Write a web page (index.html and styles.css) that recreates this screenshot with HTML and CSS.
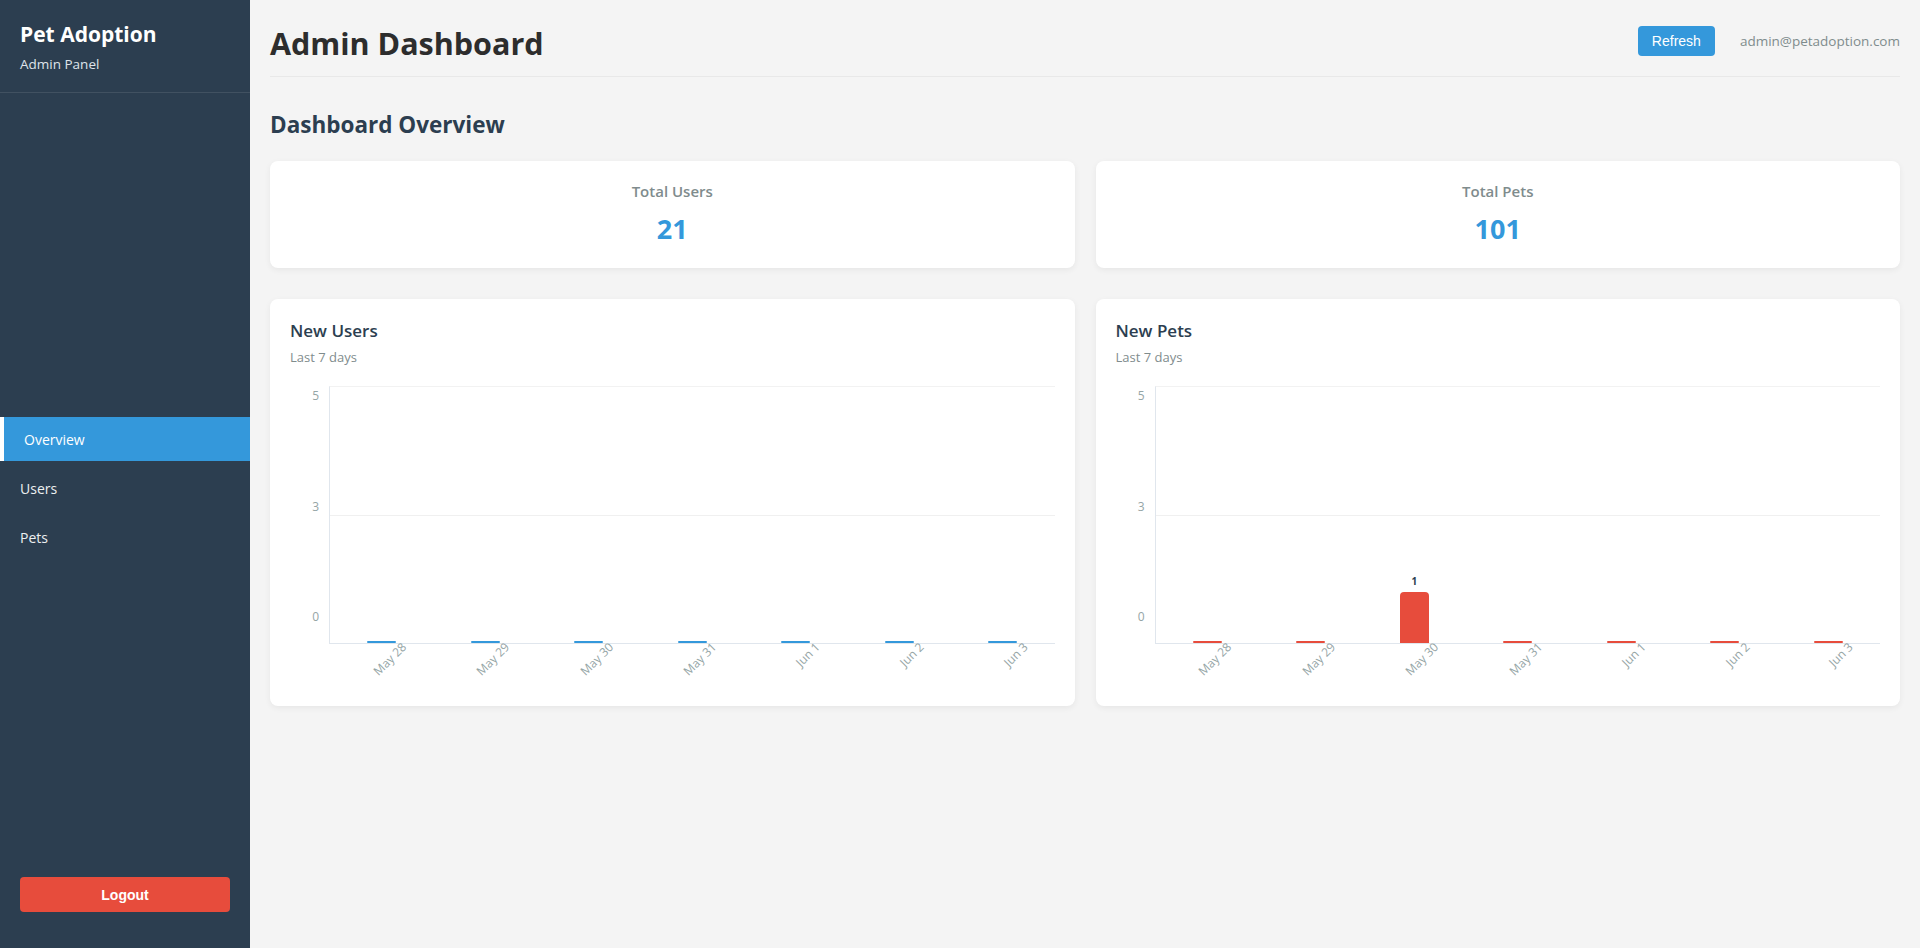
FILE: index.html
```html
<!DOCTYPE html>
<html lang="en">
<head>
<meta charset="utf-8">
<title>Admin Dashboard</title>
<link rel="stylesheet" href="styles.css">
</head>
<body>
<div class="layout">
  <aside class="sidebar">
    <div class="sidebar-header">
      <h1 class="brand">Pet Adoption</h1>
      <p class="brand-sub">Admin Panel</p>
    </div>
    <nav class="nav">
      <ul class="nav-list">
        <li class="nav-item active">Overview</li>
        <li class="nav-item">Users</li>
        <li class="nav-item">Pets</li>
      </ul>
    </nav>
    <div class="sidebar-footer">
      <button class="logout-btn">Logout</button>
    </div>
  </aside>

  <main class="main">
    <header class="topbar">
      <h1 class="page-title">Admin Dashboard</h1>
      <div class="topbar-right">
        <button class="refresh-btn">Refresh</button>
        <span class="user-email">admin@petadoption.com</span>
      </div>
    </header>

    <h2 class="section-title">Dashboard Overview</h2>

    <div class="stats">
      <div class="stat-card">
        <div class="stat-label">Total Users</div>
        <div class="stat-value">21</div>
      </div>
      <div class="stat-card">
        <div class="stat-label">Total Pets</div>
        <div class="stat-value">101</div>
      </div>
    </div>

    <div class="charts">
      <div class="chart-card">
        <div class="chart-title">New Users</div>
        <div class="chart-sub">Last 7 days</div>
        <div class="chart">
          <div class="y-axis"><span>5</span><span>3</span><span>0</span></div>
          <div class="chart-body">
            <div class="plot">
              <div class="grid-mid"></div>
              <div class="slot"><div class="bar blue zero"></div></div>
              <div class="slot"><div class="bar blue zero"></div></div>
              <div class="slot"><div class="bar blue zero"></div></div>
              <div class="slot"><div class="bar blue zero"></div></div>
              <div class="slot"><div class="bar blue zero"></div></div>
              <div class="slot"><div class="bar blue zero"></div></div>
              <div class="slot"><div class="bar blue zero"></div></div>
            </div>
            <div class="x-axis">
              <div class="x-slot"><div class="x-anchor"><span class="x-label">May 28</span></div></div>
              <div class="x-slot"><div class="x-anchor"><span class="x-label">May 29</span></div></div>
              <div class="x-slot"><div class="x-anchor"><span class="x-label">May 30</span></div></div>
              <div class="x-slot"><div class="x-anchor"><span class="x-label">May 31</span></div></div>
              <div class="x-slot"><div class="x-anchor"><span class="x-label">Jun 1</span></div></div>
              <div class="x-slot"><div class="x-anchor"><span class="x-label">Jun 2</span></div></div>
              <div class="x-slot"><div class="x-anchor"><span class="x-label">Jun 3</span></div></div>
            </div>
          </div>
        </div>
      </div>

      <div class="chart-card">
        <div class="chart-title">New Pets</div>
        <div class="chart-sub">Last 7 days</div>
        <div class="chart">
          <div class="y-axis"><span>5</span><span>3</span><span>0</span></div>
          <div class="chart-body">
            <div class="plot">
              <div class="grid-mid"></div>
              <div class="slot"><div class="bar red zero"></div></div>
              <div class="slot"><div class="bar red zero"></div></div>
              <div class="slot"><span class="bar-value">1</span><div class="bar red" style="height: 20%"></div></div>
              <div class="slot"><div class="bar red zero"></div></div>
              <div class="slot"><div class="bar red zero"></div></div>
              <div class="slot"><div class="bar red zero"></div></div>
              <div class="slot"><div class="bar red zero"></div></div>
            </div>
            <div class="x-axis">
              <div class="x-slot"><div class="x-anchor"><span class="x-label">May 28</span></div></div>
              <div class="x-slot"><div class="x-anchor"><span class="x-label">May 29</span></div></div>
              <div class="x-slot"><div class="x-anchor"><span class="x-label">May 30</span></div></div>
              <div class="x-slot"><div class="x-anchor"><span class="x-label">May 31</span></div></div>
              <div class="x-slot"><div class="x-anchor"><span class="x-label">Jun 1</span></div></div>
              <div class="x-slot"><div class="x-anchor"><span class="x-label">Jun 2</span></div></div>
              <div class="x-slot"><div class="x-anchor"><span class="x-label">Jun 3</span></div></div>
            </div>
          </div>
        </div>
      </div>
    </div>
  </main>
</div>
</body>
</html>
```

FILE: styles.css
```css
* {
  box-sizing: border-box;
}

html, body {
  margin: 0;
  padding: 0;
  height: 100%;
}

body {
  font-family: "Open Sans", "Noto Sans", sans-serif;
  background: #f4f4f4;
  color: #333;
}

.layout {
  display: flex;
  height: 100vh;
}

/* Sidebar */
.sidebar {
  width: 250px;
  flex-shrink: 0;
  background: #2c3e50;
  color: #fff;
  display: flex;
  flex-direction: column;
}

.sidebar-header {
  padding: 20px 20px 0;
  border-bottom: 1px solid rgba(255, 255, 255, 0.1);
  height: 93px;
}

.brand {
  margin: 0;
  font-size: 21px;
  font-weight: 700;
  line-height: 29px;
}

.brand-sub {
  margin: 6px 0 0;
  font-size: 13.5px;
  line-height: 18px;
  color: #dfe4ea;
}

.nav {
  flex: 1;
  display: flex;
  flex-direction: column;
  justify-content: center;
  padding-top: 26px;
}

.nav-list {
  list-style: none;
  margin: 0;
  padding: 0;
  display: flex;
  flex-direction: column;
  gap: 5px;
}

.nav-item {
  height: 44px;
  display: flex;
  align-items: center;
  padding: 0 20px;
  font-size: 14px;
  color: #ecf0f1;
}

.nav-item.active {
  background: #3498db;
  border-left: 4px solid #fff;
  color: #fff;
}

.sidebar-footer {
  padding: 20px 20px 36px;
}

.logout-btn {
  width: 100%;
  height: 35px;
  border: none;
  border-radius: 4px;
  background: #e74c3c;
  color: #fff;
  font-family: "Liberation Sans", Arial, sans-serif;
  font-size: 14px;
  font-weight: 700;
}

/* Main */
.main {
  flex: 1;
  padding: 20px 20px;
  overflow: hidden;
}

.topbar {
  display: flex;
  justify-content: space-between;
  align-items: center;
  height: 57px;
  padding-bottom: 8px;
  border-bottom: 1px solid #e8e8e8;
}

.page-title {
  margin: 0;
  font-size: 30.5px;
  font-weight: 700;
  color: #2d2d2d;
  line-height: 40px;
  position: relative;
  top: -1px;
}

.topbar-right {
  display: flex;
  align-items: center;
  gap: 25px;
  margin-top: -7px;
}

.refresh-btn {
  height: 30px;
  padding: 0 14px;
  border: none;
  border-radius: 4px;
  background: #3498db;
  color: #fff;
  font-family: "Liberation Sans", Arial, sans-serif;
  font-size: 14px;
}

.user-email {
  font-size: 13.5px;
  color: #7f8c8d;
}

.section-title {
  margin: 33px 0 21px;
  font-size: 22.5px;
  line-height: 30px;
  font-weight: 700;
  color: #2c3e50;
}

.stats {
  display: grid;
  grid-template-columns: 1fr 1fr;
  gap: 21px;
}

.stat-card {
  background: #fff;
  border-radius: 8px;
  box-shadow: 0 2px 6px rgba(0, 0, 0, 0.06);
  padding: 19px 20px 20px;
  height: 107px;
  text-align: center;
}

.stat-label {
  font-size: 15px;
  line-height: 22px;
  font-weight: 600;
  color: #7f8c8d;
  margin-bottom: 10px;
}

.stat-value {
  font-size: 27px;
  line-height: 34px;
  font-weight: 700;
  color: #3498db;
}

.charts {
  display: grid;
  grid-template-columns: 1fr 1fr;
  gap: 21px;
  margin-top: 31px;
}

.chart-card {
  background: #fff;
  border-radius: 8px;
  box-shadow: 0 2px 6px rgba(0, 0, 0, 0.06);
  padding: 19px 20px 20px;
  height: 407px;
}

.chart-title {
  font-size: 17px;
  line-height: 24px;
  font-weight: 600;
  color: #2c3e50;
  margin-top: 1px;
}

.chart-sub {
  font-size: 13px;
  line-height: 18px;
  color: #7f8c8d;
  margin-top: 5px;
}

.chart {
  display: flex;
  margin-top: 20px;
}

.y-axis {
  width: 39px;
  height: 258px;
  display: flex;
  flex-direction: column;
  justify-content: space-between;
  align-items: flex-end;
  padding: 2px 10px 20px 0;
  font-size: 12px;
  line-height: 15px;
  color: #95a5a6;
}

.chart-body {
  flex: 1;
  min-width: 0;
}

.plot {
  height: 258px;
  position: relative;
  display: flex;
  align-items: flex-end;
  border-left: 1px solid #e0e6ed;
  border-bottom: 1px solid #e0e6ed;
  border-top: 1px solid #f2f2f2;
}

.grid-mid {
  position: absolute;
  left: 0;
  right: 0;
  top: 50%;
  border-top: 1px solid #f0f0f0;
}

.slot {
  flex: 1;
  height: 100%;
  display: flex;
  flex-direction: column;
  justify-content: flex-end;
  align-items: center;
}

.bar {
  width: 29px;
  border-radius: 4px 4px 0 0;
}

.bar.zero {
  height: 2px;
  border-radius: 1px;
}

.bar.blue {
  background: #3498db;
}

.bar.red {
  background: #e74c3c;
}

.bar-value {
  font-size: 10px;
  font-weight: 700;
  color: #2c3e50;
  line-height: 12px;
  margin-bottom: 5px;
}

.x-axis {
  display: flex;
  height: 41px;
}

.x-slot {
  flex: 1;
  display: flex;
  justify-content: center;
}

.x-anchor {
  width: 36px;
  display: flex;
  justify-content: flex-end;
}

.x-label {
  flex-shrink: 0;
  display: inline-block;
  font-size: 12px;
  line-height: 14px;
  color: #95a5a6;
  white-space: nowrap;
  transform: translateY(-4px) rotate(-45deg);
  transform-origin: 100% 0;
  height: 14px;
}
```
